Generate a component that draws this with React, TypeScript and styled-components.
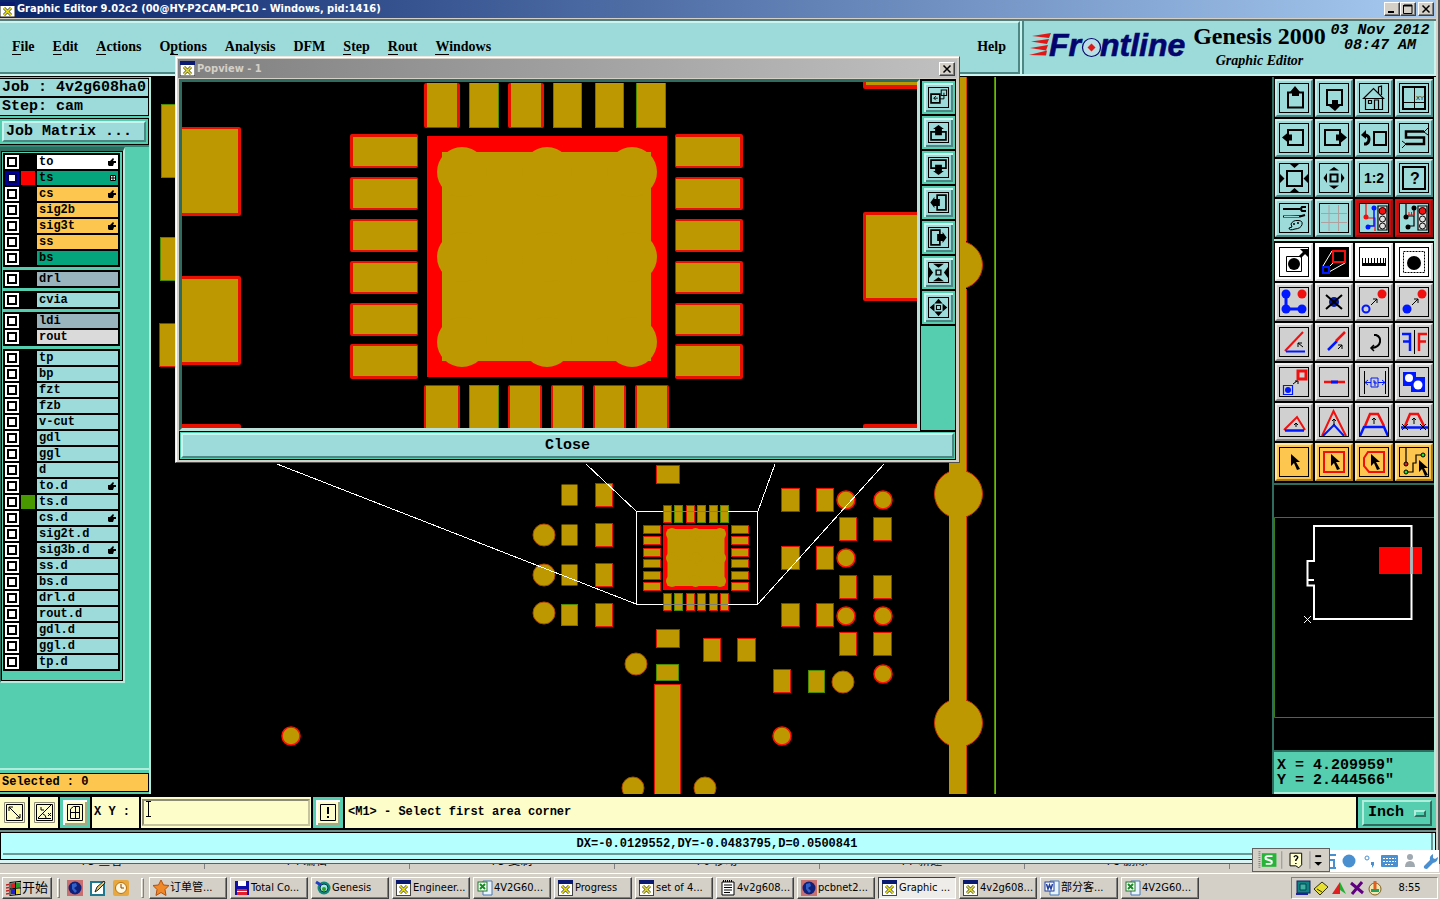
import React from 'react';
import styled, { createGlobalStyle, css } from 'styled-components';

const mono = '"Liberation Mono", "Courier New", monospace';
const serif = '"Liberation Serif", "Times New Roman", serif';
const ui = '"DejaVu Sans Condensed", "DejaVu Sans", "Noto Sans CJK SC", sans-serif';

const c = {
  aqua: '#9cdbda',
  aquaLight: '#c9f5f1',
  aquaDark: '#4d8683',
  green: '#54ceae',
  greenLight: '#b0eddc',
  greenDark: '#2f6b5f',
  cream: '#fdfdca',
  orange: '#fdc64f',
  gold: '#bd9800',
  red: '#ff0000',
  win: '#d4d0c8',
  grey: '#d0d0d0',
};

const Global = createGlobalStyle`
  *, *::before, *::after { box-sizing: border-box; }
  html, body { margin: 0; background: #000; }
  button, input, select { font: inherit; color: inherit; margin: 0; padding: 0; border-radius: 0; }
  svg { display: block; }
`;

/* ---------- page frame ---------- */

const Page = styled.div`
  position: relative;
  display: flex;
  flex-direction: column;
  height: 100vh;
  overflow: hidden;
  color: #000;
`;

const AppWindow = styled.div`
  flex: 1;
  min-height: 0;
  display: flex;
  flex-direction: column;
  background: ${c.win};
  padding-right: 2px;
  border-right: 2px solid #585858;
`;

const TitleBar = styled.div<{ $muted?: boolean }>`
  flex: none;
  height: ${p => (p.$muted ? 19 : 18)}px;
  display: flex;
  align-items: center;
  gap: 2px;
  padding: 0 2px 0 ${p => (p.$muted ? 2 : 0)}px;
  font: bold 11px/18px ${ui};
  color: ${p => (p.$muted ? '#d4d0c8' : '#fff')};
  background: ${p => (p.$muted ? 'linear-gradient(90deg, #808080, #c0c0c0)' : 'linear-gradient(90deg, #0a246a, #a6caf0)')};
`;

const TitleText = styled.span`
  flex: 1;
  white-space: nowrap;
`;

const CaptionButton = styled.button<{ $apart?: boolean }>`
  width: 16px;
  height: 14px;
  margin-left: ${p => (p.$apart ? 0 : -2)}px;
  border: 1px solid;
  border-color: #fff #404040 #404040 #fff;
  background: ${c.win};
  box-shadow: inset -1px -1px #808080;
`;

const Header = styled.header`
  flex: none;
  height: 58px;
  display: flex;
  background: ${c.aquaLight};
  border-top: 2px solid #557d7b;
  border-bottom: 1px solid #000;
  margin-top: 1px;
  padding-bottom: 2px;
`;

const MenuBar = styled.nav`
  flex: 1;
  display: flex;
  align-items: center;
  gap: 18px;
  padding: 0 12px 2px;
  background: ${c.aqua};
  border-top: 2px solid ${c.aquaLight};
  border-right: 2px solid ${c.aquaDark};
  border-bottom: 2px solid ${c.aquaDark};
  font: bold 14px/18px ${serif};
`;

const MenuButton = styled.button<{ $last?: boolean }>`
  border: 0;
  background: none;
  margin-left: ${p => (p.$last ? 'auto' : 0)};
  white-space: nowrap;
`;

const Mnemonic = styled.span`
  border-bottom: 1px solid #000;
`;

const Brand = styled.div`
  flex: none;
  width: 414px;
  display: flex;
  margin-left: 2px;
  padding: 2px 4px 0 3px;
  background: ${c.aqua};
  border-left: 2px solid ${c.aquaDark};
  border-right: 2px solid ${c.aquaLight};
`;

const Product = styled.div`
  flex: 1;
  text-align: center;
  white-space: nowrap;
`;

const ProductName = styled.div`
  font: bold 24px/26px ${serif};
`;

const ProductPart = styled.div`
  font: italic bold 14px/24px ${serif};
`;

const Clock = styled.time`
  width: 100px;
  font: italic bold 15px/15px ${mono};
  text-align: center;
  white-space: nowrap;
`;

const Body = styled.main`
  flex: 1;
  min-height: 0;
  display: flex;
  background: #000;
  padding-bottom: 2px;
`;

/* ---------- left column ---------- */

const Sidebar = styled.aside`
  flex: none;
  width: 151px;
  display: flex;
  flex-direction: column;
  background: ${c.green};
  border-right: 2px solid ${c.greenLight};
`;

const JobSection = styled.div`
  padding: 1px 0 0;
  border-bottom: 2px solid #318a75;
  font: bold 15px/17px ${mono};
`;

const InfoLine = styled.div`
  height: 19px;
  border: 1px solid #000;
  border-left: 0;
  padding-left: 2px;
  background: ${c.aqua};
  white-space: pre;
  overflow: hidden;
`;

const MatrixFrame = styled.div`
  margin-top: 2px;
  height: 27px;
  display: flex;
  padding: 2px;
  border: 1px solid #000;
  border-left: 0;
`;

const MatrixButton = styled.button`
  flex: 1;
  text-align: left;
  padding-left: 2px;
  background: ${c.aqua};
  border: 2px solid;
  border-color: ${c.aquaLight} ${c.aquaDark} ${c.aquaDark} ${c.aquaLight};
`;

const LayerPanel = styled.div`
  width: 125px;
  border: solid;
  border-width: 4px 2px 2px 1px;
  border-color: ${c.greenDark} ${c.greenLight} ${c.greenLight} ${c.greenDark};
`;

const LayerList = styled.div`
  display: flex;
  flex-direction: column;
  gap: 3px;
  border: 1px solid #000;
  padding: 1px 2px 9px 1px;
`;

const LayerGroup = styled.div`
  display: grid;
  gap: 2px;
  padding: 2px;
  background: #000;
`;

const LayerRow = styled.label`
  display: grid;
  grid-template-columns: 14px 14px 1fr;
  gap: 2px;
  height: 14px;
  font: bold 12px/14px ${mono};
`;

const LayerCheck = styled.input<{ $active?: boolean }>`
  appearance: none;
  width: 14px;
  height: 14px;
  border: 2px solid ${p => (p.$active ? '#0000a0' : '#fff')};
  background: #fff;
  box-shadow: inset 0 0 0 2px ${p => (p.$active ? '#000050' : '#000')};
`;

const Swatch = styled.span<{ $color?: string }>`
  background: ${p => p.$color || '#000'};
`;

const LayerName = styled.span<{ $bg: string }>`
  display: flex;
  align-items: center;
  justify-content: space-between;
  padding: 0 2px;
  background: ${p => p.$bg};
`;

const SidebarFoot = styled.div`
  margin-top: auto;
  border-top: 2px solid ${c.greenLight};
  padding: 3px 0 2px;
`;

const Selected = styled.div`
  height: 19px;
  border: 1px solid #000;
  border-left: 0;
  padding-left: 2px;
  background: ${c.orange};
  font: bold 12px/17px ${mono};
`;

/* ---------- canvas ---------- */

const Canvas = styled.section`
  flex: 1;
  min-width: 0;
  display: flex;
  background: #000;
  overflow: hidden;
`;

const FillSvg = styled.svg`
  flex: 1;
  min-width: 0;
  height: 100%;
`;

/* ---------- right column ---------- */

const Tools = styled.aside`
  flex: none;
  width: 164px;
  display: flex;
  flex-direction: column;
  border-left: 2px solid ${c.greenDark};
  border-right: 2px solid ${c.greenLight};
`;

const ToolGrid = styled.div`
  display: grid;
  grid-template-columns: repeat(4, 38px);
  gap: 2px;
  padding: 2px 1px;
  background: #000;
`;

const GridRule = styled.div`
  height: 2px;
  background: ${c.greenLight};
`;

type Tone = 'aqua' | 'red' | 'white' | 'grey' | 'orange';
const tones: Record<Tone, [string, string, string]> = {
  aqua: [c.aqua, '#c4efeb', '#4d8683'],
  red: [c.aqua, '#d81010', '#981010'],
  white: ['#fff', '#fff', '#d8d8d8'],
  grey: [c.grey, '#f0f0f0', '#858585'],
  orange: [c.orange, '#ffe49c', '#a67c1e'],
};

const ToolButton = styled.button<{ $tone: Tone }>`
  width: 38px;
  height: 38px;
  border: 2px solid;
  border-color: ${p => tones[p.$tone][1]} ${p => tones[p.$tone][2]} ${p => tones[p.$tone][2]} ${p => tones[p.$tone][1]};
  padding: 2px;
  background: ${p => (p.$tone === 'red' ? '#c01010' : tones[p.$tone][0])};
  svg {
    border: 1px solid #000;
    background: ${p => tones[p.$tone][0]};
  }
`;

const MiniMap = styled.div`
  flex: 1;
  min-height: 0;
  display: flex;
  border-top: 2px solid ${c.greenDark};
`;

const Coords = styled.div`
  height: 44px;
  border-top: 2px solid ${c.greenDark};
  border-bottom: 2px solid ${c.greenLight};
  background: ${c.green};
  padding: 6px 3px;
  font: bold 15px/15px ${mono};
  white-space: pre;
`;

/* ---------- prompt and status ---------- */

const Prompt = styled.div`
  flex: none;
  height: 34px;
  display: flex;
  gap: 2px;
  padding: 1px 0 1px;
  background: #000;
  border-bottom: 1px solid #000;
  font: bold 12px/31px ${mono};
`;

const PromptButton = styled.button<{ $raised?: boolean }>`
  flex: none;
  width: ${p => (p.$raised ? 30 : 28)}px;
  display: grid;
  place-items: center;
  background: ${c.cream};
  border: ${p => (p.$raised ? `3px solid ${c.green}` : '0')};
  ${p => p.$raised && css`box-shadow: inset 2px 2px #fff, inset -2px -2px #a8a888;`}
`;

const PromptLabel = styled.label`
  flex: none;
  width: 47px;
  padding-left: 2px;
  background: ${c.cream};
  white-space: pre;
`;

const PromptField = styled.div`
  position: relative;
  flex: none;
  width: 170px;
  display: flex;
  background: ${c.cream};
  padding: 2px 1px;
`;

const PromptInput = styled.input`
  flex: 1;
  min-width: 0;
  padding: 0 4px;
  outline: 0;
  background: ${c.cream};
  border: 2px solid;
  border-color: #8e8c74 #c6c49c #c6c49c #8e8c74;
`;

const Beam = styled.svg`
  position: absolute;
  left: 4px;
  top: 4px;
  pointer-events: none;
`;

const Message = styled.output`
  flex: 1;
  padding-left: 3px;
  background: ${c.cream};
  white-space: nowrap;
`;

const UnitBox = styled.label`
  flex: none;
  width: 78px;
  display: grid;
  align-items: center;
  padding: 3px 4px 2px;
  background: ${c.green};
`;

const UnitSelect = styled.select`
  grid-area: 1 / 1;
  appearance: none;
  height: 26px;
  padding-left: 4px;
  border: 2px solid;
  border-color: ${c.greenLight} ${c.greenDark} ${c.greenDark} ${c.greenLight};
  background: ${c.green};
  font: bold 15px/20px ${mono};
`;

const UnitMark = styled.span`
  grid-area: 1 / 1;
  justify-self: end;
  width: 12px;
  height: 7px;
  margin-right: 6px;
  border: 2px solid;
  border-color: ${c.greenLight} ${c.greenDark} ${c.greenDark} ${c.greenLight};
  pointer-events: none;
`;

const Status = styled.div`
  flex: none;
  height: 34px;
  padding: 2px 0 0;
  background: #6f8f8d;
  border-bottom: 1px solid #606060;
`;

const StatusInner = styled.div`
  height: 28px;
  border: 1px solid #000;
  background: #b5ffff;
  padding: 0 2px 2px;
`;

const StatusText = styled.output`
  display: block;
  height: 22px;
  border-bottom: 2px solid #6a9998;
  border-right: 2px solid #6a9998;
  font: bold 12px/23px ${mono};
  text-align: center;
`;

const StatusFoot = styled.div`
  height: 3px;
  background: #dcf3f3;
`;

/* ---------- desktop bits ---------- */

const KeyStrip = styled.div`
  flex: none;
  height: 9px;
  display: grid;
  grid-template-columns: repeat(7, 205px);
  background: ${c.win};
  overflow: hidden;
`;

const KeyCell = styled.span`
  height: 5px;
  display: flex;
  align-items: flex-end;
  justify-content: center;
  border-right: 1px solid #808080;
  overflow: hidden;
  font: 12px/16px ${ui};
`;

const TaskBar = styled.footer`
  flex: none;
  height: 27px;
  display: flex;
  align-items: center;
  gap: 3px;
  padding: 1px 2px 0;
  border-top: 1px solid #fff;
  background: ${c.win};
  font: 11px/16px ${ui};
`;

const TaskButton = styled.button<{ $start?: boolean; $active?: boolean }>`
  flex: none;
  width: ${p => (p.$start ? 50 : 78)}px;
  height: 22px;
  display: flex;
  align-items: center;
  gap: 1px;
  padding: 0 3px;
  overflow: hidden;
  white-space: nowrap;
  background: ${p => (p.$active ? '#efede9' : c.win)};
  border: 1px solid;
  border-color: ${p => (p.$active ? '#404040 #fff #fff #404040' : '#fff #404040 #404040 #fff')};
  box-shadow: ${p => (p.$active ? 'none' : 'inset -1px -1px #808080')};
  ${p => p.$start && css`font-size: 13px; padding: 0 2px;`}
  svg { flex: none; }
`;

const Grip = styled.span`
  width: 3px;
  height: 20px;
  border: 1px solid;
  border-color: #fff #808080 #808080 #fff;
  margin: 0 2px;
`;

const QuickLaunch = styled.div`
  width: 71px;
  display: flex;
  gap: 7px;
  padding-left: 2px;
`;

const Tray = styled.div`
  margin-left: auto;
  width: 147px;
  height: 22px;
  display: flex;
  align-items: center;
  gap: 2px;
  padding: 0 3px;
  border: 1px solid;
  border-color: #808080 #fff #fff #808080;
`;

const TrayTime = styled.time`
  margin: 0 auto;
`;

const ImeBars = styled.div`
  position: absolute;
  right: 1px;
  bottom: 28px;
  display: flex;
  align-items: flex-end;
`;

const ImeMain = styled.div`
  width: 78px;
  height: 24px;
  display: flex;
  align-items: center;
  gap: 8px;
  padding: 0 4px;
  background: ${c.win};
  border: 1px solid #606060;
`;

const ImeTray = styled.div`
  width: 109px;
  height: 22px;
  background: #fff;
`;

/* ---------- popview ---------- */

const PopWindow = styled.section`
  position: absolute;
  left: 175px;
  top: 56px;
  width: 785px;
  height: 407px;
  display: flex;
  flex-direction: column;
  padding: 2px;
  background: ${c.win};
  border: 1px solid;
  border-color: #eceae4 #505050 #505050 #eceae4;
  box-shadow: inset 1px 1px #fff;
`;

const PopMain = styled.div`
  flex: 1;
  min-height: 0;
  display: flex;
  margin: 1px 1px 0;
`;

const PopView = styled.div`
  flex: 1;
  min-width: 0;
  display: flex;
  background: #000;
  border: 3px solid;
  border-color: ${c.greenDark} #b9dfd8 #b9dfd8 ${c.greenDark};
`;

const PopTools = styled.div`
  width: 36px;
  display: flex;
  flex-direction: column;
  align-items: stretch;
  gap: 2px;
  padding: 1px 0 0 1px;
  background: linear-gradient(#000 246px, ${c.green} 246px);
  border: 1px solid #000;
`;

const PopTool = styled.button`
  height: 33px;
  padding: 2px;
  border: 2px solid ${c.green};
  background: ${c.aqua};
  box-shadow: inset 2px 2px ${c.aquaLight}, inset -2px -2px ${c.aquaDark};
  display: grid;
  place-items: center;
  svg { border: 1px solid #000; }
`;

const PopFoot = styled.div`
  height: 29px;
  display: flex;
  margin: 0 1px;
  padding: 1px;
  border: 1px solid #000;
  background: ${c.green};
`;

const CloseButton = styled.button`
  flex: 1;
  border: 2px solid;
  border-color: ${c.aquaLight} ${c.aquaDark} ${c.aquaDark} ${c.aquaLight};
  background: ${c.aqua};
  font: bold 15px/20px ${mono};
`;

/* ---------- small drawings ---------- */

const XIcon = () => (
  <svg width="15" height="15" viewBox="0 0 15 15">
    <rect width="15" height="15" fill="#fff" stroke="#222" />
    <rect width="15" height="4" fill="#0a1a70" />
    <path d="M4 6l7 7M11 6l-7 7" stroke="#555" strokeWidth="3" />
    <path d="M4 6l7 7M11 6l-7 7" stroke="#e8e020" strokeWidth="1.5" />
  </svg>
);

const CaptionGlyph = ({ kind }: { kind: 'min' | 'max' | 'close' }) => (
  <svg width="14" height="12" viewBox="0 0 14 12" fill="none" stroke="#000" strokeWidth="2">
    {kind === 'min' && <path d="M3 9h6" />}
    {kind === 'max' && <><path d="M3 2.5h8" /><path d="M2.5 2v8.500h8.500v-8.500" strokeWidth="1" /></>}
    {kind === 'close' && <path d="M3.500 2.500l7 7M10.500 2.500l-7 7" strokeWidth="1.500" />}
  </svg>
);

const Hand = () => (
  <svg width="8" height="8" viewBox="0 0 8 8"><path d="M0 3h2l3-3 1 1-1 2h3v2H6l-1 3H1L0 7z" /></svg>
);
const MiniGrid = () => (
  <svg width="6" height="6" viewBox="0 0 6 6"><path d="M.5.5h5v5h-5zM3 0v6M0 3h6" fill="#fff" stroke="#000" /></svg>
);

const Logo = () => (
  <svg width="162" height="48" viewBox="1027 25 162 48" role="img" aria-label="Frontline">
    <g fill="#e01818">
      <path d="M1032 38l19-3-2 5zM1031 43.500l18-2.500-2 5zM1030 50l18-3-2 5.500zM1029 57l18-4.500-1 5z" />
    </g>
    <g fontFamily="Liberation Sans, Arial, sans-serif" fontWeight="bold" fontStyle="italic" fontSize="32" fill="#04046e" stroke="#04046e" strokeWidth=".6">
      <text x="1049" y="58">Fr</text>
      <text x="1100" y="58">ntline</text>
    </g>
    <circle cx="1091.500" cy="49.500" r="9" fill="#b8dfe6" stroke="#04046e" strokeWidth="1.200" />
    <path d="M1091.500 45.500l4 4-4 4-4-4z" fill="#e01818" />
  </svg>
);

/* ---------- tool icons, drawn on a 28-unit square ---------- */

const k = { stroke: '#000', fill: 'none', strokeWidth: 2 };
const b = { stroke: '#0018ff', fill: 'none', strokeWidth: 2 };
const r = { stroke: '#f01010', fill: 'none', strokeWidth: 2 };
const arrow = (d: string) => <path d={d} />;
const pointer = 'M11 6l9 8h-4l4 7-3 1-3-7-3 3z';

const icons: Record<string, React.ReactNode> = {
  up: <><path d="M8 8.500h15v15H8z" {...k} />{arrow('M15 2l5 6h-1v4h-7V8h-2z')}</>,
  down: <><path d="M7 6h15v15H7z" {...k} />{arrow('M15 27l5-5h-2v-6h-6v6H9z')}</>,
  home: <g stroke="#000" fill="none"><path d="M3.500 14.500l10-10 10 10zM5.500 15v10.500h17V15M14.500 25V16h4v9.500M8.500 16.500h3v3h-3zM18.500 9V3l3-1v9" strokeWidth="1.200" /></g>,
  xy: <><path d="M3 3h22v22H3z" {...k} /><path d="M14.500 3v22M3 18.500h22" stroke="#000" /><text x="16" y="16" fontSize="6" fontFamily="Liberation Sans">XY</text></>,
  left: <><path d="M8 6h15v15H8z" {...k} />{arrow('M2 13.500l6-5v2h4v6H8v2z')}</>,
  right: <><path d="M5 6h15v15H5z" {...k} />{arrow('M27 13.500l-6-5v2h-5v6h5v2z')}</>,
  back: <><path d="M14 8h12v13H14z" {...k} /><path d="M4 20h2q3-1 3-5t-5-4" {...k} strokeWidth={3} />{arrow('M1 11l5-5v9z')}</>,
  snake: <><path d="M24 7.500H6v6h18V20H6" {...k} strokeWidth={2.5} /><path d="M24 8l4-4M24 8l4 3M6 20l-4-3M6 20l-4 4" stroke="#000" /></>,
  shrink: <><path d="M7 7h15v15H7z" {...k} />{arrow('M10 0h9l-4.500 4zM10 28h9l-4.500-4zM0 10l4.500 4.500L0 19zM28 10l-4.500 4.500L28 19z')}</>,
  grow: <><path d="M10.500 10.500h7v7h-7z" {...k} />{arrow('M9 6.500h10L14 3zM9 21.500h10L14 25zM7 9v10l-3.500-5zM21 9v10l3.500-5z')}</>,
  ratio: <text x="14" y="19" textAnchor="middle" fontSize="14" fontWeight="bold" fontFamily="Liberation Sans">1:2</text>,
  help: <><path d="M3 3h22v22H3z" {...k} /><text x="15" y="20" textAnchor="middle" fontSize="16" fontWeight="bold" fontFamily="Liberation Sans">?</text></>,
  tools: <><path d="M3 5h17M3 12.500h17l5-1.500" stroke="#000" strokeWidth="2" /><path d="M4 12.500h15" stroke="#9cdbda" strokeWidth="1" /><path d="M26 3h-4q-2 2 0 4h4" {...k} /><path d="M11 20q2-4 7-3.500 5 0 4 4t-7 4.500q-6 2-6-1l3-1z" stroke="#000" fill="none" /><circle cx="14" cy="20" r="1" /><circle cx="18" cy="19" r="1" /></>,
  grid: <path d="M9 1v26M18.500 1v26M1 9.500h26M1 18.500h26" stroke="#b0a0a0" fill="none" />,
  netRed: <><path d="M6 0v12M6 14v0h9v13" {...r} strokeWidth={1.2} /><path d="M14 4v18H8" {...b} strokeWidth={1.5} /><circle cx="6" cy="13" r="2.500" fill="#f01010" /><circle cx="14" cy="4" r="2.500" fill="#0018ff" /><circle cx="8" cy="23" r="2.500" fill="#0018ff" /><Lamp /></>,
  netBlack: <><path d="M6 0v12h8M14 4v18H8" {...k} strokeWidth={1.2} /><path d="M8 11h6M9 8v4M11.500 8v4M14 8v4" {...r} strokeWidth={1} /><circle cx="6" cy="13" r="2.500" /><circle cx="14" cy="4" r="2.500" /><circle cx="8" cy="23" r="2.500" /><Lamp /></>,
  feature: <><path d="M6.500 8.500h15v15h-15z" stroke="#000" fill="none" /><circle cx="14" cy="16" r="6" /><path d="M20 9l5-5" stroke="#000" strokeWidth="3" />{arrow('M20 1h8v8z')}</>,
  zoomArea: <><rect width="28" height="28" /><path d="M3 18L12 3M9 24l16-9M10 18l4-4" stroke="#fff" /><path d="M13 3h12v11H13z" {...r} /><path d="M3 19h6v6H3z" {...b} /></>,
  ruler: <path d="M2 10h1v5h2v-5h1v5h2v-5h1v5h2v-5h1v5h2v-5h1v5h2v-5h1v5h2v-5h1v5h2v-5h1v5h1v-5h1v8H2z" />,
  dotted: <><path d="M3.500 3.500h21v21h-21z" stroke="#000" fill="none" strokeDasharray="2 1" /><circle cx="14" cy="15" r="7" /></>,
  chain: <><path d="M6 6v15h16" {...b} strokeWidth={3} /><circle cx="6" cy="6" r="4.500" fill="#0018ff" /><circle cx="6" cy="21" r="4.500" fill="#0018ff" /><circle cx="22" cy="21" r="4.500" fill="#0018ff" /><circle cx="22" cy="6" r="4.500" fill="#f01010" /></>,
  remove: <><circle cx="14" cy="14" r="5" fill="#0018a0" /><path d="M6 7l16 14M22 7L6 21" {...k} /></>,
  moveHollow: <><circle cx="6" cy="21" r="3.500" {...b} /><circle cx="22" cy="6" r="4.500" fill="#f01010" /><path d="M11 17l6-6M13 11h4v4" stroke="#000" fill="none" /></>,
  moveSolid: <><circle cx="7" cy="21" r="4.500" fill="#0018ff" /><circle cx="22" cy="6" r="4.500" fill="#f01010" /><path d="M12 17l6-6M14 11h4v4" stroke="#000" fill="none" /></>,
  angle: <><path d="M5 23L23 4" {...r} /><path d="M6 23.500h19" {...b} /><path d="M23 19l-5-4M18 19v-4h4" stroke="#000" fill="none" /></>,
  extend: <><path d="M8 22l9-9" {...b} strokeWidth={2.5} /><path d="M16 13l9-9" {...r} strokeWidth={2.5} /><path d="M18 21l4-4M18 17h4v4" stroke="#000" fill="none" /></>,
  rotate: <><path d="M14 7h2q5 2 4 7t-8 6" {...k} /><path d="M14 17l-3 3 3 3" {...k} strokeWidth={1.5} /></>,
  mirror: <><path d="M14.500 2v24" stroke="#000" /><path d="M2 6h8v17M10 13.500H3" {...b} strokeWidth={2.5} /><path d="M27 6h-8v17M19 13.500h7" {...r} strokeWidth={2.5} /></>,
  copyScale: <><path d="M18 3h8v8h-8z" {...r} strokeWidth={3} /><path d="M3.500 17.500h9v9h-9z" {...b} strokeWidth={1.2} /><circle cx="8" cy="22" r="3" fill="#0018ff" /><path d="M13 16l4-3M15 13h3v3" stroke="#000" fill="none" /></>,
  segment: <><path d="M4 14h21" {...r} strokeWidth={2.5} /><path d="M11 14h7" {...b} strokeWidth={3} /></>,
  spacing: <><path d="M4.500 3v23M25.500 3v23" stroke="#000" /><path d="M5 14.500h6M18 14.500h7M8 12l-3 2.500L8 17M22 12l3 2.500-3 2.500M11 10h7v9h-7zM14 12v3h3M15 13v5" stroke="#0018ff" fill="none" /></>,
  merge: <><path d="M3 4h13v5h9v15H11v-6H3z" fill="#0018ff" /><circle cx="9" cy="10" r="4" fill="#fff" /><circle cx="18" cy="17" r="4.500" fill="#fff" /></>,
  tri: <><path d="M4 22L17 9l8 13" {...r} /><path d="M5 22.500h19" {...b} strokeWidth={2.500} /><path d="M16 19v-4M14 17l2-2 2 2" stroke="#000" fill="none" /></>,
  tent: <><path d="M2 28L13.500 3 26 28" {...r} /><path d="M3 28l11-11 10 11" {...b} /><path d="M14 17v-6M12 13l2-2 2 2" stroke="#000" fill="none" /></>,
  trap: <><path d="M5 18l5-12h8l6 12" {...r} strokeWidth={2.5} /><path d="M0 28l4-9h20l4 9" {...b} strokeWidth={2.5} /><path d="M14 16v-6M12 12l2-2 2 2" stroke="#000" fill="none" /></>,
  trapCut: <><path d="M5 18l5-12h8l6 12" {...r} strokeWidth={2.5} /><path d="M1 19.500h27" {...b} strokeWidth={2.5} /><path d="M14 16v-6M12 12l2-2 2 2M2 16l6 6M8 16l-6 6M20 16l6 6M26 16l-6 6" stroke="#000" fill="none" /></>,
  pick: arrow(pointer),
  pickBox: <><path d="M4 4h20v20H4z" {...r} />{arrow(pointer)}</>,
  pickPoly: <><path d="M8 4h16v20H9l-5-6V10z" {...r} />{arrow(pointer)}</>,
  pickNet: <><path d="M6 0v14M6 24h7V15h3V7h6" stroke="#000" fill="none" strokeWidth="1.200" /><circle cx="6" cy="16" r="2" fill="#e02010" stroke="#000" /><circle cx="23" cy="7" r="2" fill="#20e030" stroke="#000" /><circle cx="6" cy="24" r="2" fill="#20e030" stroke="#000" /><path d={pointer} transform="translate(8 6)" /></>,
  swap: <><path d="M3 9h13v13H3z" {...k} strokeWidth={2.5} /><path d="M18 3h8v8h-8z" {...k} strokeWidth={1.5} /><path d="M16 16h6v-9M13 15H7M10 12l-3 3 3 3" {...k} strokeWidth={1.4} /></>,
  popUp: <><path d="M3 13h22v12H3z" {...k} strokeWidth={2.5} />{arrow('M14 3l8 6h-3v9H9V9H6z')}</>,
  popDown: <><path d="M3 3h22v12H3z" {...k} strokeWidth={2.5} />{arrow('M14 25l8-6h-3v-9H9v9H6z')}</>,
  popLeft: <><path d="M12 3h13v22H12z" {...k} strokeWidth={2.5} />{arrow('M2 14l6-8v3h8v10H8v3z')}</>,
  popRight: <><path d="M3 3h13v22H3z" {...k} strokeWidth={2.5} />{arrow('M26 14l-6-8v3h-8v10h8v3z')}</>,
  popShrink: <><path d="M10.500 10.500h7v7h-7z" {...k} />{arrow('M6 1h16l-8 6zM6 27h16l-8-6zM0 6l6 8-6 8zM28 6l-6 8 6 8z')}</>,
  popGrow: <><path d="M11 11h6v6h-6z" {...k} strokeWidth={1.5} />{arrow('M8 8h12L14 1zM8 20h12L14 27zM8 8v12l-7-6zM20 8v12l7-6z')}</>,
};

function Lamp() {
  return (
    <>
      <path d="M18 2h9v24h-9z" stroke="#000" strokeWidth="1.200" fill="#e0e0e0" />
      <circle cx="22.500" cy="7" r="3.500" fill="#f01010" stroke="#000" />
      <circle cx="22.500" cy="15" r="3" fill="none" stroke="#000" />
      <circle cx="22.500" cy="22" r="3" fill="none" stroke="#000" />
    </>
  );
}

const Icon = ({ name, size }: { name: string; size: number }) => (
  <svg width={size} height={size} viewBox="0 0 28 28">{icons[name]}</svg>
);

const viewTools: [string, Tone][] = [
  ...['up', 'down', 'home', 'xy', 'left', 'right', 'back', 'snake', 'shrink', 'grow', 'ratio', 'help', 'tools', 'grid'].map(n => [n, 'aqua'] as [string, Tone]),
  ['netRed', 'red'], ['netBlack', 'red'],
];
const editTools: [string, Tone][] = [
  ...['feature', 'zoomArea', 'ruler', 'dotted'].map(n => [n, 'white'] as [string, Tone]),
  ...['chain', 'remove', 'moveHollow', 'moveSolid', 'angle', 'extend', 'rotate', 'mirror', 'copyScale', 'segment', 'spacing', 'merge', 'tri', 'tent', 'trap', 'trapCut'].map(n => [n, 'grey'] as [string, Tone]),
  ...['pick', 'pickBox', 'pickPoly', 'pickNet'].map(n => [n, 'orange'] as [string, Tone]),
];

/* ---------- layers ---------- */

type Layer = { name: string; bg?: string; hand?: boolean; grid?: boolean; swatch?: string };
const groups: Layer[][] = [
  [
    { name: 'to', bg: '#fff', hand: true },
    { name: 'ts', bg: '#04a47c', grid: true, swatch: '#ff0000' },
    { name: 'cs', bg: c.orange, hand: true },
    { name: 'sig2b', bg: c.orange },
    { name: 'sig3t', bg: c.orange, hand: true },
    { name: 'ss', bg: c.orange },
    { name: 'bs', bg: '#04a47c' },
  ],
  [{ name: 'drl', bg: '#9ab4bd' }],
  [{ name: 'cvia' }],
  [{ name: 'ldi', bg: '#9ab4bd' }, { name: 'rout', bg: '#dadada' }],
  [
    ...['tp', 'bp', 'fzt', 'fzb', 'v-cut', 'gdl', 'ggl', 'd'].map(name => ({ name })),
    { name: 'to.d', hand: true },
    { name: 'ts.d', swatch: '#489800' },
    { name: 'cs.d', hand: true },
    { name: 'sig2t.d' },
    { name: 'sig3b.d', hand: true },
    ...['ss.d', 'bs.d', 'drl.d', 'rout.d', 'gdl.d', 'ggl.d', 'tp.d'].map(name => ({ name })),
  ],
];

/* ---------- board drawing ---------- */

const edge: Record<string, string> = { r: '#e81000', g: '#4c8a00', n: 'none' };
const Pad = ({ x, y, w, h, e = 'r' }: { x: number; y: number; w: number; h: number; e?: string }) => (
  <rect x={x + 0.5} y={y + 0.5} width={w - 1} height={h - 1} fill={c.gold} stroke={edge[e]} />
);

const pads: [number, number, number, number, string?][] = [
  [656, 465, 24, 19],
  ...[484, 524, 564, 604].map(y => [561, y, 17, 22, y === 604 ? 'g' : 'n'] as [number, number, number, number, string]),
  ...[483, 523, 563, 603].map(y => [595, y, 18, 24] as [number, number, number, number]),
  [656, 629, 24, 19], [656, 664, 23, 17, 'g'], [654, 684, 27, 112],
  [703, 638, 18, 24], [737, 638, 19, 24],
  [773, 669, 18, 24], [808, 670, 17, 23, 'g'],
  ...[488, 546, 603].flatMap(y => [[781, y, 19, 24], [816, y, 18, 24]] as [number, number, number, number][]),
  ...[517, 575, 632].flatMap(y => [[839, y, 18, 24], [873, y, 19, 24]] as [number, number, number, number][]),
  [161, 104, 20, 74, 'g'], [160, 237, 20, 44, 'g'], [159, 323, 20, 44],
];
const discs: [number, number][] = [[544, 535], [544, 575], [544, 613], [636, 664], [633, 788], [705, 788], [843, 682]];
const rings: [number, number][] = [[846, 500], [883, 500], [846, 558], [846, 616], [883, 616], [883, 674], [782, 736], [291, 736]];

const Board = () => (
  <FillSvg viewBox="151 77 1121 717" preserveAspectRatio="xMinYMin slice">
    {[265, 494, 723].map(y => <circle key={y} cx="958.5" cy={y} r="24" fill={c.gold} stroke="#c83000" />)}
    <path d="M949 70h17v730h-17z" fill={c.gold} />
    <path d="M966.500 70v171M966.500 289v182M966.500 517v183M966.500 746v54" stroke="#d84000" />
    <path d="M994.500 70v730" stroke="#4c8a00" />
    <path d="M995.500 70v730" stroke="#8c8ca8" />
    {pads.map(([x, y, w, h, e], i) => <Pad key={i} x={x} y={y} w={w} h={h} e={e} />)}
    {discs.map(([x, y], i) => <circle key={i} cx={x} cy={y} r="11" fill={c.gold} stroke="#b04800" />)}
    {rings.map(([x, y], i) => <circle key={i} cx={x} cy={y} r="9" fill={c.gold} stroke="#ff1000" strokeWidth="1.500" />)}
    <rect x="663" y="525" width="65" height="65" fill={c.red} />
    <rect x="667.500" y="529" width="57" height="57" fill={c.gold} />
    {[672, 695.5, 720].map(x => [534, 558, 581].map(y => <circle key={`${x}-${y}`} cx={x} cy={y} r="6" fill={c.gold} />))}
    {[0, 1, 2, 3, 4, 5].map(i => (
      <g key={i}>
        <Pad x={643} y={525 + Math.round(i * 11.4)} w={18} h={9} />
        <Pad x={731} y={525 + Math.round(i * 11.4)} w={18} h={9} />
        <Pad x={663 + Math.round(i * 11.4)} y={505} w={9} h={18} e={[0, 2].includes(i) ? 'r' : 'g'} />
        <Pad x={663 + Math.round(i * 11.4)} y={593} w={9} h={18} e={i === 1 ? 'g' : 'r'} />
      </g>
    ))}
    <g stroke="#fff" fill="none" strokeWidth="1" shapeRendering="crispEdges">
      <path d="M636.500 511.500h121v93h-121z" />
      <path d="M636 511l-50-47M758 511l17-47M636 604L277 464M758 604l126-140" />
    </g>
    <g stroke="#7a7a78" fill="none" shapeRendering="crispEdges">
      <path d="M663 511.500h65M663 604.500h65" />
    </g>
  </FillSvg>
);

const PopPad = ({ x, y, w, h, e = 'r', l = 1, t = 1, rt = 1, bt = 1 }: { x: number; y: number; w: number; h: number; e?: string; l?: number; t?: number; rt?: number; bt?: number }) => (
  <>
    <rect x={x} y={y} width={w} height={h} fill={edge[e]} rx={l + rt > 3 ? 2 : 0} />
    <rect x={x + l} y={y + t} width={w - l - rt} height={h - t - bt} fill={c.gold} />
  </>
);

const sideRows = [[134, 34], [177, 33], [219, 33], [261, 33], [303, 33], [344, 35]];

const PopBoard = () => (
  <FillSvg viewBox="182 82 735 346" preserveAspectRatio="xMinYMin slice">
    <PopPad x={179} y={127} w={62} h={89} rt={3} t={2} bt={3} />
    <PopPad x={179} y={276} w={62} h={89} rt={3} t={3} bt={3} />
    <PopPad x={179} y={424} w={62} h={20} rt={3} t={4} />
    <PopPad x={863} y={70} w={70} h={19} l={3} bt={4} />
    <PopPad x={863} y={212} w={70} h={89} l={3} t={3} bt={3} />
    <PopPad x={863} y={424} w={70} h={20} l={3} t={4} />
    {sideRows.map(([y, h], i) => (
      <g key={y}>
        <PopPad x={350} y={y} w={68} h={h} l={3} t={i ? 2 : 3} bt={i === 5 ? 3 : 2} />
        <PopPad x={675} y={y} w={68} h={h} rt={3} t={i ? 2 : 3} bt={i === 5 ? 3 : 2} />
      </g>
    ))}
    {([[424, 36, 'r'], [469, 30, 'g'], [508, 36, 'r'], [553, 29, 'g'], [595, 29, 'g'], [636, 30, 'g']] as [number, number, string][]).map(([x, w, e]) => (
      <PopPad key={x} x={x} y={83} w={w} h={45} t={0} e={e} l={e === 'r' ? 3 : 1} rt={e === 'r' ? 3 : 1} />
    ))}
    {([[424, 36, 'r'], [469, 30, 'g'], [508, 34, 'r'], [551, 33, 'r'], [593, 33, 'r'], [635, 34, 'r']] as [number, number, string][]).map(([x, w, e]) => (
      <PopPad key={x} x={x} y={385} w={w} h={50} e={e} l={e === 'r' ? 2 : 1} rt={e === 'r' ? 2 : 1} />
    ))}
    <rect x="427" y="136" width="240" height="241" fill={c.red} />
    <rect x="442" y="152" width="209" height="209" fill={c.gold} />
    {[462, 547, 632].map(x => [172, 257, 342].map(y => <circle key={`${x}-${y}`} cx={x} cy={y} r="25" fill={c.gold} />))}
  </FillSvg>
);

const MapDrawing = () => (
  <FillSvg viewBox="1274 485 160 264" preserveAspectRatio="xMinYMin meet">
    <path d="M1434 517.500h-159.500v200H1434" stroke="#3f7a10" fill="none" />
    <rect x="1379" y="547" width="43" height="27" fill={c.red} />
    <path d="M1314 526h97.500v93H1314v-33.500h-6.500V561h6.500zM1308 580h6" stroke="#fff" strokeWidth="2" fill="none" />
    <path d="M1314 565v14" stroke="#000" strokeWidth="2.500" />
    <path d="M1411.500 547v27" stroke="#50e0e8" strokeWidth="2" />
    <path d="M1304 616l7 7M1311 616l-7 7" stroke="#fff" />
  </FillSvg>
);

/* ---------- taskbar drawings ---------- */

const taskIcons: Record<string, React.ReactNode> = {
  start: <g transform="skewY(-6) translate(0 1)"><path d="M6 3h4v5H6z" fill="#e02020" /><path d="M11 3h4v5h-4z" fill="#20a020" /><path d="M6 9h4v5H6z" fill="#2020d0" /><path d="M11 9h4v5h-4z" fill="#e8d020" /><path d="M5 2h11v13H5zM10.500 2v13M5 8.500h11" stroke="#000" fill="none" /><path d="M1 4h3M1 7h3M1 10h3M1 13h3" stroke="#c02020" strokeWidth="1.500" /></g>,
  globe: <><rect width="16" height="16" fill="#c87070" /><circle cx="8" cy="8" r="6.500" fill="#102078" /><path d="M5 4l4-1 1 3-3 2 3 3-2 2-3-4z" fill="#3060c8" /></>,
  notes: <><rect x="1" y="2" width="13" height="13" fill="#fff" stroke="#207890" strokeWidth="2" /><path d="M5 12l2-5 7-6 1 2-7 7z" fill="#e8c860" stroke="#222" /></>,
  clock: <><rect width="16" height="16" rx="2" fill="#e8a840" /><circle cx="8" cy="8" r="5.500" fill="#fff8e0" stroke="#b87010" /><path d="M8 4v4h3" stroke="#804000" fill="none" /></>,
  star: <path d="M8 0l2.500 5 5.500.500-4 4 1 6-5-3-5 3 1-6-4-4L5.500 5z" fill="#f08828" stroke="#b05010" />,
  disk: <><path d="M1 1h14v14H1z" fill="#1010a8" /><path d="M4 1h8v5H4z" fill="#fff" /><path d="M3 9h10v6H3z" fill="#e02030" /><path d="M3 11.500h10" stroke="#fff" /></>,
  gear: <><circle cx="9" cy="8" r="6.500" fill="#108878" /><circle cx="9" cy="8" r="4" fill="#a0e8e0" stroke="#043848" /><path d="M1 2l5 3" stroke="#2040c0" strokeWidth="3" /><circle cx="9" cy="9" r="2" fill="#30a020" /></>,
  x: <><rect x=".5" y=".5" width="14" height="15" fill="#fff" stroke="#444" /><rect width="15" height="4" fill="#0a1a70" /><path d="M4 6l7 7M11 6l-7 7" stroke="#555" strokeWidth="3" /><path d="M4 6l7 7M11 6l-7 7" stroke="#e8e020" strokeWidth="1.500" /></>,
  excel: <><path d="M6 1h9v14H6z" fill="#e8f4ff" stroke="#4878b0" /><rect x="1" y="2" width="9" height="9" fill="#fff" stroke="#207828" /><path d="M3 4l5 5M8 4l-5 5" stroke="#109020" strokeWidth="2" /></>,
  word: <><path d="M6 1h9v14H6z" fill="#e8f4ff" stroke="#4878b0" /><rect x="1" y="2" width="9" height="9" fill="#fff" stroke="#2040a0" /><path d="M2.500 4l1.500 5 1.500-4 1.500 4 1.500-5" stroke="#2040a0" fill="none" strokeWidth="1.500" /></>,
  text: <><path d="M2 2h12v13H2z" fill="#fff" stroke="#000" /><path d="M4 5h8M4 7.500h8M4 10h8M4 12.500h6" stroke="#000" /><path d="M3 1h10" stroke="#000" strokeWidth="2" strokeDasharray="1 1" /></>,
  chip: <><rect x="2" y="1" width="13" height="12" fill="#108080" stroke="#102060" /><path d="M1 14h12" stroke="#2020a0" strokeWidth="2" /><path d="M5 4h6v6H5z" fill="#40b0a0" stroke="#045" /></>,
  key: <path d="M1 9l8-7 6 5-8 8zM4 9l5 3" fill="#e8e030" stroke="#303010" />,
  sail: <><path d="M1 14L9 2v12z" fill="#e02020" /><path d="M9 2l6 12-6-4z" fill="#20b030" /></>,
  cross: <path d="M2 3l12 10M13 2L3 14" stroke="#600080" strokeWidth="3" />,
  drop: <><circle cx="8" cy="9" r="6" fill="#f0e8b0" stroke="#806020" /><path d="M8 1v8" stroke="#e06020" strokeWidth="3" /><path d="M4 9h8v3H4z" fill="#20a060" /></>,
};
const TaskIcon = ({ name, size = 16 }: { name: string; size?: number }) => <svg width={size} height={size} viewBox="0 0 16 16">{taskIcons[name]}</svg>;

const tasks: [string, string][] = [
  ['star', '订单管...'], ['disk', 'Total Co...'], ['gear', 'Genesis'], ['x', 'Engineer...'], ['excel', '4V2G60...'],
  ['x', 'Progress'], ['x', 'set of 4...'], ['text', '4v2g608...'], ['globe', 'pcbnet2...'], ['x', 'Graphic ...'],
  ['x', '4v2g608...'], ['word', '部分客...'], ['excel', '4V2G60...'],
];

const menus = ['File', 'Edit', 'Actions', 'Options', 'Analysis', 'DFM', 'Step', 'Rout', 'Windows'];
const mnemonicAt: Record<string, number> = { File: 0, Edit: 0, Actions: 0, Options: 1, Step: 0, Rout: 0, Windows: 0 };

const MenuLabel = ({ text }: { text: string }) => {
  const i = mnemonicAt[text];
  if (i === undefined) return <>{text}</>;
  return <>{text.slice(0, i)}<Mnemonic>{text[i]}</Mnemonic>{text.slice(i + 1)}</>;
};

export default function App() {
  return (
    <Page>
      <Global />
      <AppWindow>
        <TitleBar>
          <XIcon />
          <TitleText>Graphic Editor 9.02c2 (00@HY-P2CAM-PC10 - Windows, pid:1416)</TitleText>
          <CaptionButton aria-label="Minimize"><CaptionGlyph kind="min" /></CaptionButton>
          <CaptionButton aria-label="Maximize"><CaptionGlyph kind="max" /></CaptionButton>
          <CaptionButton $apart aria-label="Close window"><CaptionGlyph kind="close" /></CaptionButton>
        </TitleBar>
        <Header>
          <MenuBar>
            {menus.map(m => <MenuButton key={m}><MenuLabel text={m} /></MenuButton>)}
            <MenuButton $last>Help</MenuButton>
          </MenuBar>
          <Brand>
            <Logo />
            <Product>
              <ProductName>Genesis 2000</ProductName>
              <ProductPart>Graphic Editor</ProductPart>
            </Product>
            <Clock>03 Nov 2012<br />08:47 AM</Clock>
          </Brand>
        </Header>
        <Body>
          <Sidebar>
            <JobSection>
              <InfoLine>Job : 4v2g608ha0</InfoLine>
              <InfoLine>Step: cam</InfoLine>
              <MatrixFrame><MatrixButton>Job Matrix ...</MatrixButton></MatrixFrame>
            </JobSection>
            <LayerPanel>
              <LayerList>
                {groups.map((g, gi) => (
                  <LayerGroup key={gi}>
                    {g.map(l => (
                      <LayerRow key={l.name}>
                        <LayerCheck type="checkbox" $active={l.name === 'ts'} />
                        <Swatch $color={l.swatch} />
                        <LayerName $bg={l.bg || c.aqua}>{l.name}{l.hand && <Hand />}{l.grid && <MiniGrid />}</LayerName>
                      </LayerRow>
                    ))}
                  </LayerGroup>
                ))}
              </LayerList>
            </LayerPanel>
            <SidebarFoot><Selected>Selected : 0</Selected></SidebarFoot>
          </Sidebar>
          <Canvas><Board /></Canvas>
          <Tools>
            <ToolGrid>
              {viewTools.map(([n, t]) => <ToolButton key={n} $tone={t} aria-label={n}><Icon name={n} size={30} /></ToolButton>)}
            </ToolGrid>
            <GridRule />
            <ToolGrid>
              {editTools.map(([n, t]) => <ToolButton key={n} $tone={t} aria-label={n}><Icon name={n} size={30} /></ToolButton>)}
            </ToolGrid>
            <MiniMap><MapDrawing /></MiniMap>
            <Coords>{'X = 4.209959"\nY = 2.444566"'}</Coords>
          </Tools>
        </Body>
        <Prompt>
          <PromptButton aria-label="Snap">
            <svg width="23" height="23" viewBox="0 0 23 23" fill="none" stroke="#000"><path d="M1.500 1.500h20v20h-20z" stroke="#8e8c74" /><path d="M3.500 3.500h16v16h-16zM6 6l11 11M6 10V6h4M17 13v4h-4" /></svg>
          </PromptButton>
          <PromptButton aria-label="Angle">
            <svg width="23" height="23" viewBox="0 0 23 23" fill="none" stroke="#000"><path d="M1.500 1.500h20v20h-20z" stroke="#8e8c74" /><path d="M3.500 3.500h16v16h-16zM5 17L18 4M5 17.500h13M8 6v3h3M10 13q3 1 3 4M15 12l3 3M18 12l-3 3" /></svg>
          </PromptButton>
          <PromptButton $raised aria-label="Grid">
            <svg width="16" height="17" viewBox="0 0 16 17" fill="none" stroke="#000"><path d="M.5.500h15v16H.500zM3.500 5l3-2.500h6v12h-9zM8.500 2v13M3 8.500h10" /></svg>
          </PromptButton>
          <PromptLabel htmlFor="xy">X Y :</PromptLabel>
          <PromptField>
            <PromptInput id="xy" type="text" />
            <Beam width="7" height="17" viewBox="0 0 7 17"><path d="M1 .500h5M3.500 1v15M1 15.500h5" stroke="#000" fill="none" /></Beam>
          </PromptField>
          <PromptButton $raised aria-label="Notice">
            <svg width="16" height="17" viewBox="0 0 16 17"><path d="M.5.500h15v16H.500z" fill="none" stroke="#000" /><path d="M7 3h2v7H7zM7 12h2v2H7z" /></svg>
          </PromptButton>
          <Message>&lt;M1&gt; - Select first area corner</Message>
          <UnitBox>
            <UnitSelect aria-label="Units" defaultValue="Inch"><option>Inch</option><option>MM</option></UnitSelect>
            <UnitMark />
          </UnitBox>
        </Prompt>
        <Status>
          <StatusInner><StatusText>DX=-0.0129552,DY=-0.0483795,D=0.0500841</StatusText></StatusInner>
          <StatusFoot />
        </Status>
      </AppWindow>

      <KeyStrip>
        {['F3 查看', 'F4 编辑', 'F5 复制', 'F6 移动', 'F7 新建', 'F8 删除', ''].map((t, i) => <KeyCell key={i}>{t}</KeyCell>)}
      </KeyStrip>
      <TaskBar>
        <TaskButton $start><TaskIcon name="start" />开始</TaskButton>
        <Grip />
        <QuickLaunch><TaskIcon name="globe" /><TaskIcon name="notes" /><TaskIcon name="clock" /></QuickLaunch>
        <Grip />
        {tasks.map(([icon, label], i) => (
          <TaskButton key={i} $active={label === 'Graphic ...'}><TaskIcon name={icon} />{label}</TaskButton>
        ))}
        <Tray>
          {['chip', 'key', 'sail', 'cross', 'drop'].map(n => <TaskIcon key={n} name={n} />)}
          <TrayTime>8:55</TrayTime>
        </Tray>
      </TaskBar>

      <PopWindow>
        <TitleBar $muted>
          <XIcon />
          <TitleText>Popview - 1</TitleText>
          <CaptionButton $apart aria-label="Close popview"><CaptionGlyph kind="close" /></CaptionButton>
        </TitleBar>
        <PopMain>
          <PopView><PopBoard /></PopView>
          <PopTools>
            {['swap', 'popUp', 'popDown', 'popLeft', 'popRight', 'popShrink', 'popGrow'].map(n => (
              <PopTool key={n} aria-label={n}><Icon name={n} size={21} /></PopTool>
            ))}
          </PopTools>
        </PopMain>
        <PopFoot><CloseButton>Close</CloseButton></PopFoot>
      </PopWindow>

      <ImeBars>
        <ImeMain>
          <svg width="70" height="20" viewBox="0 0 70 20">
            <path d="M2.500 1v18" stroke="#808080" strokeWidth="2" strokeDasharray="1 1" />
            <rect x="5" y="3" width="15" height="14" fill="#28b438" />
            <path d="M16 6h-5q-3 0-2 3l6 2q1 3-2 3H9" fill="none" stroke="#fff" strokeWidth="2" />
            <path d="M25.500 1v18M54.500 1v18" stroke="#909090" />
            <path d="M34 3h12v12l-3 3-3-2h-6z" fill="#ffffd0" stroke="#000" />
            <path d="M38 7q2-3 4 0 0 1-2 3v1M40 13v1" fill="none" stroke="#000" strokeWidth="1.500" />
            <path d="M60 6h6" stroke="#000" strokeWidth="2" /><path d="M59 12h8l-4 4z" />
          </svg>
        </ImeMain>
        <ImeTray>
          <svg width="109" height="22" viewBox="0 0 109 22" fill="#4a90d0">
            <path d="M0 4h6v2H0zM0 9h5v8h1v2H0v-2h3v-6H0z" />
            <circle cx="19" cy="11" r="6.500" />
            <circle cx="37" cy="8" r="2" fill="none" stroke="#4a90d0" /><path d="M41 12h3v3l-2 3v-3h-1z" />
            <rect x="51" y="5" width="17" height="12" rx="1" /><path d="M53 8.500h13M53 11.500h13M55 14.500h9" stroke="#fff" strokeDasharray="2 1" />
            <g fill="#a0a8b0"><circle cx="80" cy="7" r="3" /><path d="M75 17q0-6 5-6t5 6z" /></g>
            <path d="M94 16l6-6q-1-4 3-6l0 4 2 1 3-2q0 5-5 6l-6 6q-4 0-3-3z" />
          </svg>
        </ImeTray>
      </ImeBars>
    </Page>
  );
}
